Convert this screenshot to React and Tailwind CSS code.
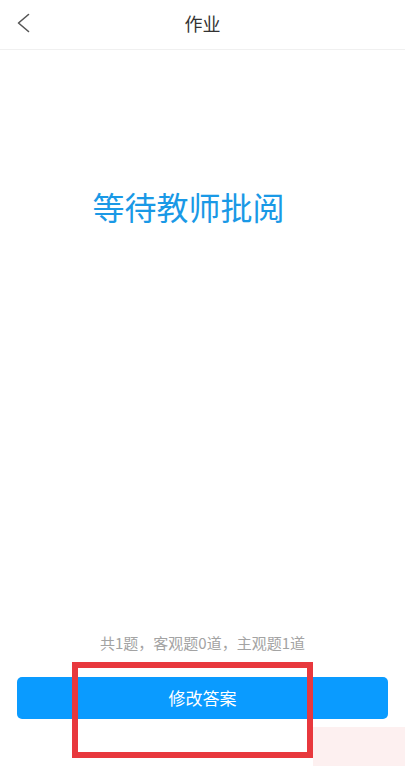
const font = { fontFamily: '"Noto Sans CJK SC", "Noto Sans", sans-serif' };

function BackArrow() {
  return (
    <svg width="13" height="20" viewBox="0 0 13 20" fill="none" stroke="#555" strokeWidth="1.6" strokeLinecap="round" strokeLinejoin="round">
      <polyline points="11.5,1.5 1.5,10 11.5,18.5" />
    </svg>
  );
}

export default function App() {
  return (
    <div className="relative flex h-[766px] w-full flex-col overflow-hidden bg-white" style={font}>
      {/* header */}
      <div className="relative flex h-[50px] items-center justify-center border-b border-[#f0f0f0]">
        <button className="absolute left-[17px] top-[13px]">
          <BackArrow />
        </button>
        <span className="pb-[2px] text-[18px] text-[#333]">作业</span>
      </div>

      {/* status */}
      <div className="mt-[140px] flex justify-center pr-7">
        <h1 className="text-[32px] leading-[32px] font-normal text-[#1a99e6]">等待教师批阅</h1>
      </div>

      <div className="flex-1" />

      {/* summary + action */}
      <div className="flex flex-col items-center px-[17px] pb-[47px]">
        <p className="text-[15px] leading-[20px] text-[#a3a3a3]">共1题，客观题0道，主观题1道</p>
        <button className="mt-[24px] flex h-[42px] w-full items-center justify-center rounded-[5px] bg-[#0a9bff] text-[17px] text-white">
          修改答案
        </button>
      </div>

      {/* screenshot annotation */}
      <div className="absolute left-[72px] top-[662px] h-[96px] w-[241px] border-[6px] border-[#e8383d]" />
      <div className="absolute left-[313px] right-0 top-[727px] bottom-0 bg-[#fdf0f0]" />
    </div>
  );
}
